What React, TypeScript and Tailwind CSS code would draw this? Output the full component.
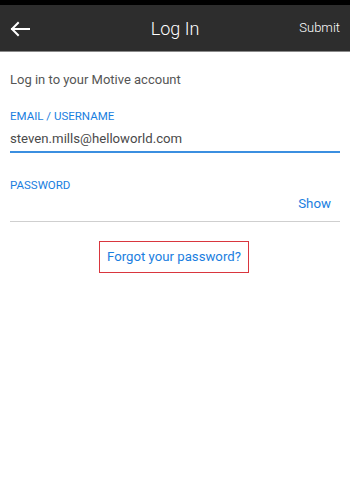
import React from 'react';

const ArrowLeft = () => (
    <svg width="20" height="16" viewBox="0 0 20 16" fill="none" stroke="white" strokeWidth="2" strokeLinecap="square">
        <path d="M2 8H19" />
        <path d="M8 2L2 8L8 14" />
    </svg>
);

export default function App() {
    return (
        <div className="w-[350px] h-[485px] bg-white flex flex-col font-['Roboto',sans-serif]">
            <div className="h-[5px] bg-black" />
            {/* Header */}
            <div className="h-[47px] bg-[#2d2d2d] border-b border-[#8a8a8a] flex items-center justify-between px-[10px]">
                <div className="w-[60px] flex items-center pt-[1px]">
                    <ArrowLeft />
                </div>
                <span className="text-white text-[18px] font-light">Log In</span>
                <span className="w-[60px] text-right text-white text-[13px] font-light">Submit</span>
            </div>

            {/* Form */}
            <div className="flex flex-col px-[10px] pt-[19px]">
                <p className="text-[13px] text-[#555555] leading-[18px]">Log in to your Motive account</p>

                <label className="mt-[20px] text-[11.5px] text-[#1a7ee0] leading-[14px]">EMAIL / USERNAME</label>
                <div className="h-[30px] flex items-end pb-[3px] border-b-2 border-[#3b8fe0]">
                    <span className="text-[13.2px] text-[#4a4a4a] leading-[18px]">steven.mills@helloworld.com</span>
                </div>

                <label className="mt-[25px] text-[11.5px] text-[#1a7ee0] leading-[14px]">PASSWORD</label>
                <div className="h-[30px] flex items-end justify-end border-b border-[#cfcfcf] pr-[9px] pb-[8px]">
                    <span className="text-[13.3px] text-[#1a7ee0] leading-[18px]">Show</span>
                </div>

                <div className="flex justify-center mt-[19px]">
                    <div className="w-[150px] h-[32px] border-[1.5px] border-[#d9363e] flex items-center justify-center ml-[-2px]">
                        <span className="text-[13.2px] text-[#1a7ee0]">Forgot your password?</span>
                    </div>
                </div>
            </div>
        </div>
    );
}
